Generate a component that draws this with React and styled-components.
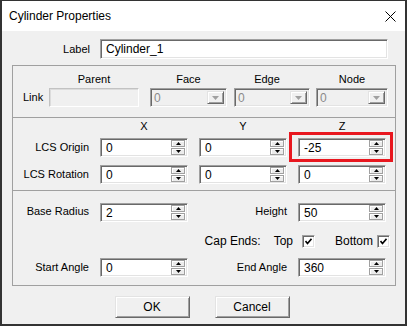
import React from 'react';
import styled, { createGlobalStyle } from 'styled-components';

const GlobalStyle = createGlobalStyle`
  html, body { margin: 0; padding: 0; background: #ffffff; }
  body { font-family: "Liberation Sans", Arial, sans-serif; }
`;

const Window = styled.div`
  width: 407px;
  height: 326px;
  box-sizing: border-box;
  border: 2px solid #333333;
  border-top-width: 1px;
  display: flex;
  flex-direction: column;
  background: #f0f0f0;
  font-family: "Liberation Sans", Arial, sans-serif;
  font-size: 11px;
  color: #000;
`;

const TitleBar = styled.div`
  height: 30px;
  flex: none;
  background: #ffffff;
  display: flex;
  align-items: center;
  justify-content: space-between;
  padding: 0 9px 0 7px;
  font-size: 12px;
`;

const Body = styled.div`
  flex: 1;
  display: flex;
  flex-direction: column;
  padding: 8px 9px 0 10px;
`;

const LabelRow = styled.div`
  display: grid;
  grid-template-columns: 78px 288px;
  column-gap: 10px;
  align-items: center;
  height: 20px;
`;

const Caption = styled.span`
  text-align: ${p => p.$align || 'right'};
  line-height: ${p => p.$lh || 13}px;
  white-space: nowrap;
  padding-left: ${p => p.$pl || 0}px;
`;

const sunken = `
  box-sizing: border-box;
  border: 1px solid;
  border-color: #a0a0a0 #ffffff #ffffff #a0a0a0;
  box-shadow: inset 1px 1px #696969, inset -1px -1px #e3e3e3;
`;

const raised = `
  box-sizing: border-box;
  border: 1px solid;
  border-color: #e3e3e3 #696969 #696969 #e3e3e3;
  box-shadow: inset 1px 1px #ffffff, inset -1px -1px #a0a0a0;
  background: #f0f0f0;
`;

const TextBox = styled.div`
  ${sunken}
  width: ${p => p.$w}px;
  height: ${p => p.$h || 19}px;
  background: #ffffff;
  display: flex;
  align-items: center;
  padding: 0 2px 0 5px;
  font-size: 12px;
  line-height: 14px;
`;

const Value = styled.span`
  flex: 1;
  color: ${p => (p.$disabled ? '#6d6d6d' : '#000')};
`;

const GroupStack = styled.div`
  margin-top: 6px;
  border: 1px solid #a0a0a0;
  & > * + * { border-top: 1px solid #a0a0a0; }
`;

const LinkGrid = styled.div`
  display: grid;
  grid-template-columns: 36px 101px 84px 82px 71px;
  grid-template-rows: 13px 19px;
  row-gap: 2px;
  align-items: center;
  padding: 7px 0 10px 0;
`;

const Header = styled.div`
  width: ${p => p.$w}px;
  text-align: center;
  line-height: 13px;
  margin-left: ${p => p.$shift || 0}px;
`;

const ParentBox = styled.div`
  box-sizing: border-box;
  width: 90px;
  height: 19px;
  border: 1px solid;
  border-color: #c2c2c2 #ffffff #ffffff #c2c2c2;
  box-shadow: inset 1px 1px #dcdcdc;
  background: #f0f0f0;
`;

const Combo = styled.div`
  ${sunken}
  width: ${p => p.$w}px;
  height: 19px;
  background: #f0f0f0;
  display: flex;
  align-items: stretch;
  padding: 2px;
  font-size: 12px;
`;

const ComboText = styled.span`
  flex: 1;
  color: #8a8a8a;
  padding-left: 1px;
  line-height: 15px;
`;

const DropButton = styled.div`
  ${raised}
  width: 17px;
  display: flex;
  align-items: center;
  justify-content: center;
`;

const CoordGrid = styled.div`
  display: grid;
  grid-template-columns: 76px 88px 88px 88px;
  grid-template-rows: 18px 27px 19px;
  column-gap: 11px;
  align-items: start;
  padding: 2px 8px 6px 0;
`;

const ShapeGrid = styled.div`
  display: grid;
  grid-template-columns: 76px 88px 1fr 89px;
  grid-template-rows: 31px 24px 19px;
  column-gap: 11px;
  align-items: start;
  padding: 12px 8px 8px 0;
`;

const Highlight = styled.div`
  position: relative;
  &::after {
    content: '';
    position: absolute;
    inset: -6px -7px -5px -9px;
    border: 3px solid #e8171f;
    pointer-events: none;
  }
`;

const CapRow = styled.div`
  grid-column: 2 / 5;
  justify-self: end;
  margin-right: -3px;
  display: flex;
  align-items: center;
  height: 14px;
`;

const CapText = styled.span`
  margin-left: ${p => p.$ml || 0}px;
  line-height: 13px;
  font-size: 12px;
`;

const CheckBox = styled.div`
  ${sunken}
  width: 13px;
  height: 13px;
  background: #ffffff;
  margin-left: ${p => p.$ml || 0}px;
  display: flex;
  align-items: center;
  justify-content: center;
`;

const Spinner = styled.div`
  width: 14px;
  display: flex;
  flex-direction: column;
  gap: 1px;
`;

const SpinButton = styled.div`
  box-sizing: border-box;
  height: 7px;
  border: 1px solid #a0a0a0;
  box-shadow: inset 1px 1px #ffffff;
  background: #ececec;
  display: flex;
  align-items: center;
  justify-content: center;
`;

const ButtonRow = styled.div`
  margin-top: 10px;
  display: flex;
  justify-content: center;
  gap: 25px;
  padding-right: 4px;
`;

const Button = styled.div`
  ${raised}
  width: 75px;
  height: 22px;
  display: flex;
  align-items: center;
  justify-content: center;
  font-size: 12px;
`;

const Arrow = ({ up, color = '#000', w = 5, h = 3 }) => (
  <svg width={w} height={h} viewBox={`0 0 ${w} ${h}`}>
    <polygon points={up ? `0,${h} ${w / 2},0 ${w},${h}` : `0,0 ${w},0 ${w / 2},${h}`} fill={color} />
  </svg>
);

const SpinField = ({ value, w = 88 }) => (
  <TextBox $w={w}>
    <Value>{value}</Value>
    <Spinner>
      <SpinButton><Arrow up /></SpinButton>
      <SpinButton><Arrow /></SpinButton>
    </Spinner>
  </TextBox>
);

const DisabledCombo = ({ w }) => (
  <Combo $w={w}>
    <ComboText>0</ComboText>
    <DropButton><Arrow color="#a0a0a0" w={7} h={4} /></DropButton>
  </Combo>
);

const Check = () => (
  <svg width="7" height="7" viewBox="0 0 7 7">
    <path d="M0.5 3 L2.5 5.5 L6.5 0.8" stroke="#000" strokeWidth="1.6" fill="none" />
  </svg>
);

const CloseIcon = () => (
  <svg width="11" height="11" viewBox="0 0 11 11">
    <path d="M0.5 0.5 L10.5 10.5 M10.5 0.5 L0.5 10.5" stroke="#000" strokeWidth="1" />
  </svg>
);

export default function App() {
  return (
    <>
      <GlobalStyle />
      <Window>
        <TitleBar>
          <span>Cylinder Properties</span>
          <CloseIcon />
        </TitleBar>
        <Body>
          <LabelRow>
            <Caption>Label</Caption>
            <TextBox $w={288} $h={20}>Cylinder_1</TextBox>
          </LabelRow>

          <GroupStack>
            <LinkGrid>
              <span />
              <Header $w={90}>Parent</Header>
              <Header $w={77}>Face</Header>
              <Header $w={76} $shift={-5}>Edge</Header>
              <Header $w={72}>Node</Header>
              <Caption $align="left" $pl={10}>Link</Caption>
              <ParentBox />
              <DisabledCombo w={77} />
              <DisabledCombo w={76} />
              <DisabledCombo w={72} />
            </LinkGrid>

            <CoordGrid>
              <span />
              <Header $w={88}>X</Header>
              <Header $w={88}>Y</Header>
              <Header $w={88}>Z</Header>
              <Caption $lh={19}>LCS Origin</Caption>
              <SpinField value="0" />
              <SpinField value="0" />
              <Highlight><SpinField value="-25" /></Highlight>
              <Caption $lh={19}>LCS Rotation</Caption>
              <SpinField value="0" />
              <SpinField value="0" />
              <SpinField value="0" />
            </CoordGrid>

            <ShapeGrid>
              <Caption $lh={17}>Base Radius</Caption>
              <SpinField value="2" />
              <Caption $lh={17}>Height</Caption>
              <SpinField value="50" />
              <CapRow>
                <CapText>Cap Ends:</CapText>
                <CapText $ml={13}>Top</CapText>
                <CheckBox $ml={9}><Check /></CheckBox>
                <CapText $ml={20}>Bottom</CapText>
                <CheckBox $ml={4}><Check /></CheckBox>
              </CapRow>
              <Caption $lh={19}>Start Angle</Caption>
              <SpinField value="0" />
              <Caption $lh={19}>End Angle</Caption>
              <SpinField value="360" />
            </ShapeGrid>
          </GroupStack>

          <ButtonRow>
            <Button>OK</Button>
            <Button>Cancel</Button>
          </ButtonRow>
        </Body>
      </Window>
    </>
  );
}
